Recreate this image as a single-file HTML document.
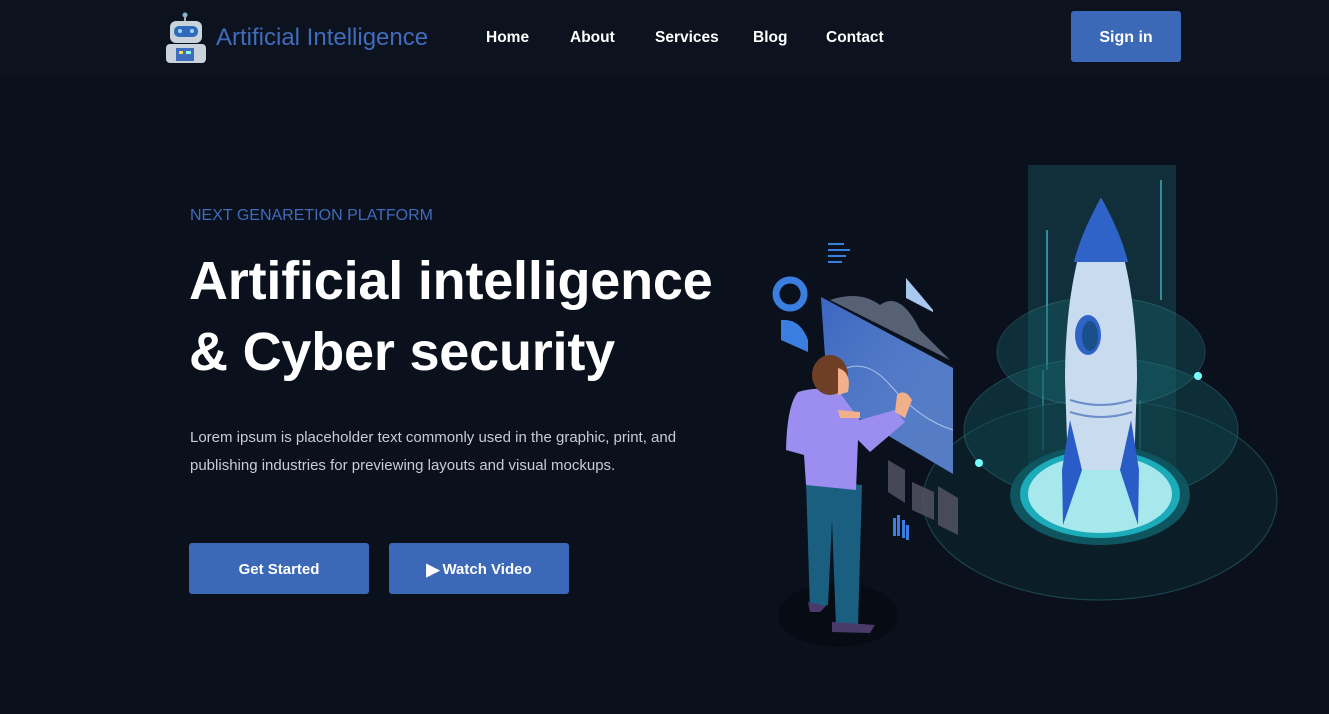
<!DOCTYPE html>
<html><head><meta charset="utf-8"><style>
*{margin:0;padding:0;box-sizing:border-box}
body{width:1329px;height:714px;background:#0a101c;font-family:"Liberation Sans",sans-serif;position:relative;overflow:hidden;color:#fff}
.nav{position:absolute;left:0;top:0;width:1329px;height:76px;background:#0c121e}
.brand{position:absolute;left:216px;top:24px;font-size:24px;color:#3f6cbc}
.links a{position:absolute;top:29px;font-size:15.5px;font-weight:bold;color:#fff;text-decoration:none}
.btn{position:absolute;background:#3c68b8;border-radius:3px;color:#fff;font-size:16px;font-weight:bold;display:flex;align-items:center;justify-content:center;padding-top:2px}
.sub{position:absolute;left:190px;top:207px;font-size:16px;color:#3f6cbc}
h1{position:absolute;left:189px;top:246px;font-size:54px;line-height:71px;font-weight:bold;letter-spacing:-0.2px;white-space:nowrap}
p{position:absolute;left:190px;top:424px;font-size:15px;line-height:28px;color:#c8ccd4;width:540px}
svg{position:absolute;left:0;top:0}
</style></head><body>
<div class="nav"></div>
<svg width="1329" height="714" viewBox="0 0 1329 714">
<circle cx="185" cy="15" r="2.5" fill="#7fb7d6"/><rect x="184" y="15" width="2" height="6" fill="#9ab"/>
<rect x="170" y="21" width="32" height="22" rx="6" fill="#c9d3dc"/>
<rect x="174" y="26" width="24" height="11" rx="5" fill="#2f6bb8"/>
<circle cx="180" cy="31" r="2" fill="#9fd8ff"/><circle cx="192" cy="31" r="2" fill="#9fd8ff"/>
<rect x="166" y="44" width="40" height="19" rx="4" fill="#c9d3dc"/>
<rect x="176" y="48" width="18" height="13" fill="#3f6cbc"/>
<rect x="179" y="51" width="4" height="3" fill="#ffd54a"/><rect x="186" y="51" width="5" height="3" fill="#8fd"/>
<rect x="1028" y="165" width="148" height="320" fill="#1e6a72" opacity="0.35"/>
<g stroke="#3fb7c0" stroke-width="2" opacity="0.7"><line x1="1047" y1="230" x2="1047" y2="370"/><line x1="1161" y1="180" x2="1161" y2="300"/><line x1="1140" y1="400" x2="1140" y2="470"/><line x1="1043" y1="370" x2="1043" y2="450"/></g>
<ellipse cx="1100" cy="500" rx="177" ry="100" fill="#0d2a33" opacity="0.55" stroke="#2f7a82" stroke-width="1"/>
<ellipse cx="1101" cy="430" rx="137" ry="72" fill="#115058" opacity="0.45" stroke="#3a8e96" stroke-width="1"/>
<ellipse cx="1101" cy="352" rx="104" ry="55" fill="#166870" opacity="0.35" stroke="#4aa0a8" stroke-width="1"/>
<ellipse cx="1100" cy="495" rx="90" ry="50" fill="#0f5560"/>
<ellipse cx="1100" cy="494" rx="80" ry="44" fill="#1ec1cf" opacity="0.8"/>
<ellipse cx="1100" cy="494" rx="72" ry="39" fill="#a6e8ec"/>
<circle cx="1198" cy="376" r="4" fill="#7ff"/><circle cx="979" cy="463" r="4" fill="#7ff"/>
<path d="M1101 198 C1082 230 1065 290 1065 380 L1068 470 L1134 470 L1137 380 C1137 290 1120 230 1101 198Z" fill="#c9dbef"/>
<path d="M1101 198 C1088 220 1078 245 1074 262 L1128 262 C1124 245 1114 220 1101 198Z" fill="#2f63c8"/>
<ellipse cx="1088" cy="335" rx="13" ry="20" fill="#2f63c8"/><ellipse cx="1090" cy="336" rx="8" ry="15" fill="#1b4f8a"/>
<path d="M1070 400 Q1101 410 1132 400 M1070 412 Q1101 422 1132 412" stroke="#6c8fc9" stroke-width="2" fill="none"/>
<path d="M1070 420 L1062 470 L1063 525 L1082 470Z M1131 420 L1139 470 L1138 525 L1120 470Z" fill="#2a5cc8"/>
<defs><linearGradient id="g" x1="0" y1="0" x2="1" y2="1"><stop offset="0" stop-color="#3b66c0"/><stop offset="1" stop-color="#8aa8e0" stop-opacity="0.5"/></linearGradient></defs>
<path d="M821 297 L953 368 L953 474 L828 400Z" fill="#1f4fa8"/>
<path d="M821 297 L953 368 L953 474 L828 400Z" fill="url(#g)"/>
<path d="M830 300 Q860 290 880 305 Q900 290 920 330 L950 360Z" fill="#8a98b0" opacity="0.6"/>
<path d="M828 380 Q860 350 890 385 Q920 420 953 430" stroke="#d0e0ff" fill="none" opacity="0.7"/>
<path d="M790 280 a14 14 0 1 0 0.1 0Z" fill="none" stroke="#3a7fe0" stroke-width="7"/>
<path d="M781 320 Q800 318 808 340 L808 352 L781 340Z" fill="#3a7fe0"/>
<path d="M906 278 L918 292 L933 310 L933 312 L906 298Z" fill="#a8c8f0"/>
<g fill="#3a7fe0"><rect x="828" y="243" width="16" height="2"/><rect x="828" y="249" width="22" height="2"/><rect x="828" y="255" width="18" height="2"/><rect x="828" y="261" width="14" height="2"/><rect x="893" y="518" width="3" height="18"/><rect x="897" y="515" width="3" height="21"/><rect x="902" y="520" width="3" height="18"/><rect x="906" y="525" width="3" height="15"/></g>
<g fill="#556" opacity="0.8"><path d="M888 460 L905 470 L905 503 L888 492Z"/><path d="M912 482 L934 492 L934 520 L912 510Z"/><path d="M938 486 L958 498 L958 535 L938 525Z"/></g>
<ellipse cx="838" cy="615" rx="60" ry="32" fill="#070b14"/>
<path d="M806 480 L862 485 L858 625 L836 627 L832 520 L828 605 L810 610Z" fill="#1b5f80"/>
<path d="M832 622 L875 625 L870 633 L832 632Z M808 602 L826 606 L820 612 L810 612Z" fill="#4a3a6a"/>
<path d="M798 392 Q820 385 840 393 L860 420 L895 410 L905 422 L870 452 L858 440 L856 490 L806 485 L804 455 L786 450 Q787 405 798 392Z" fill="#9c8ef0"/>
<path d="M897 395 Q905 388 912 400 L905 418 L895 412Z M838 410 L860 412 L860 418 L840 418Z" fill="#f2b08a"/>
<ellipse cx="830" cy="375" rx="18" ry="20" fill="#6e3f24"/>
<path d="M838 368 Q852 372 848 392 L838 395Z" fill="#f2b08a"/>
</svg>
<div class="brand">Artificial Intelligence</div>
<div class="links"><a style="left:486px">Home</a><a style="left:570px">About</a><a style="left:655px">Services</a><a style="left:753px">Blog</a><a style="left:826px">Contact</a></div>
<div class="btn" style="left:1071px;top:11px;width:110px;height:51px">Sign in</div>
<div class="sub">NEXT GENARETION PLATFORM</div>
<h1>Artificial intelligence<br>&amp; Cyber security</h1>
<p>Lorem ipsum is placeholder text commonly used in the graphic, print, and publishing industries for previewing layouts and visual mockups.</p>
<div class="btn" style="left:189px;top:543px;width:180px;height:51px;font-size:15px">Get Started</div>
<div class="btn" style="left:389px;top:543px;width:180px;height:51px;font-size:15px"><span style="font-size:17px;margin-right:3px">&#9654;</span>Watch Video</div>
</body></html>
